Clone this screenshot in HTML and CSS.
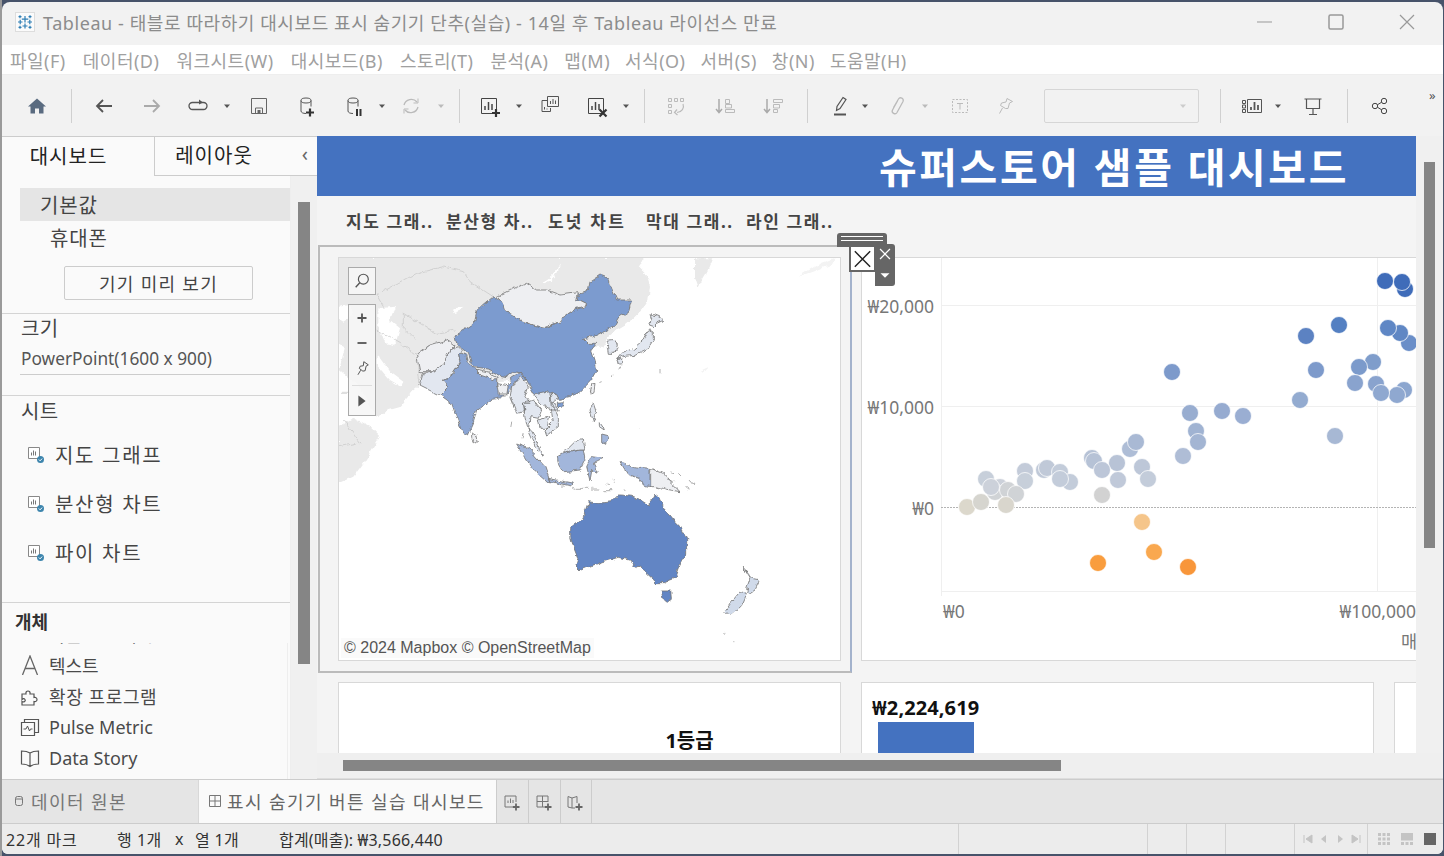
FILE: index.html
```html
<!DOCTYPE html>
<html lang="ko">
<head>
<meta charset="utf-8">
<title>Tableau</title>
<link rel="stylesheet" href="styles.css">
</head>
<body>
<svg class="defs" width="0" height="0">
  <defs>
    <symbol id="caret" viewBox="0 0 24 24"><path d="M9 10.500h6l-3 3.500z" fill="currentColor"/></symbol>
    <symbol id="bars" viewBox="0 0 24 24"><path d="M4.500 4.500h15v15h-15z" fill="none" stroke="currentColor"/><path d="M8 16v-4M11.500 16V8M15 16v-6" stroke="currentColor" stroke-width="1.500"/></symbol>
    <symbol id="sheet" viewBox="0 0 16 16"><path d="M.5.500h11v11H.5z" fill="#fff" stroke="#888"/><path d="M3.500 8.500v-3M5.500 8.500v-5M7.500 8.500v-4" stroke="#777"/><circle cx="12.500" cy="12.500" r="3.500" fill="#3d85ad"/><path d="M10.800 12.500l1.300 1.300 2-2.200" fill="none" stroke="#fff"/></symbol>
    <symbol id="cyl" viewBox="0 0 24 24"><ellipse cx="11" cy="6.500" rx="5" ry="2.500" fill="none" stroke="#555"/><path d="M6 6.500v10.500c0 1.500 2 2.500 5 2.500M16 6.500v6" fill="none" stroke="#555"/></symbol>
    <symbol id="sortbars" viewBox="0 0 24 24"><path d="M7 5v13M4 15l3 3.500 3-3.500" fill="none" stroke="#aaa" stroke-width="1.500"/></symbol>
  </defs>
</svg>
<div class="win">
  <header class="titlebar">
    <svg class="logo" viewBox="0 0 20 20" width="20" height="20">
      <rect x=".5" y=".5" width="19" height="19" fill="#fbfbfb" stroke="#ddd"/>
      <path d="M10 4v6.500M6.800 7.200h6.500M10 11.500v5M7.500 14h5M3 10h4.500M5.200 7.700v4.500M12.500 10H17M14.800 7.700v4.500M5 3.200v3M3.500 4.700h3M15 3.200v3M13.500 4.700h3M5 13.800v3M3.500 15.300h3M15 13.800v3M13.500 15.300h3" stroke="#2f7fb5" stroke-width="1.200"/>
    </svg>
    <span class="title">Tableau - 태블로 따라하기 대시보드 표시 숨기기 단추(실습) - 14일 후 Tableau 라이선스 만료</span>
    <svg class="winbtn" viewBox="0 0 24 24" width="24" height="24"><path d="M4 12h15" stroke="#999"/></svg>
    <svg class="winbtn" viewBox="0 0 24 24" width="24" height="24"><rect x="5" y="5" width="14" height="14" rx="1.500" fill="none" stroke="#999" stroke-width="1.500"/></svg>
    <svg class="winbtn" viewBox="0 0 24 24" width="24" height="24"><path d="M5 5l14 14M19 5L5 19" stroke="#999" stroke-width="1.200"/></svg>
  </header>
  <nav class="menu">
    <span>파일(F)</span><span>데이터(D)</span><span>워크시트(W)</span><span>대시보드(B)</span><span>스토리(T)</span><span>분석(A)</span><span>맵(M)</span><span>서식(O)</span><span>서버(S)</span><span>창(N)</span><span>도움말(H)</span>
  </nav>
  <div class="toolbar">
    <div class="tb"><svg viewBox="0 0 24 24"><path d="M12 4.500l9 8h-2.500v7h-4.500v-5h-4v5H5.500v-7H3z" fill="#5a6b80"/></svg></div>
    <div class="sep m14"></div>
    <div class="tb m13"><svg viewBox="0 0 24 24"><path d="M20 12H5M11 6l-6 6 6 6" fill="none" stroke="#555" stroke-width="1.800"/></svg></div>
    <div class="tb m28"><svg viewBox="0 0 24 24"><path d="M4 12h15M13 6l6 6-6 6" fill="none" stroke="#aaa" stroke-width="1.800"/></svg></div>
    <div class="tb m26"><svg viewBox="0 0 24 24"><path d="M9 8.500H6.500a3.500 3.500 0 0 0 0 7h11a3.500 3.500 0 0 0 0-7H9" fill="none" stroke="#555" stroke-width="1.300"/><path d="M13 5.500l4 3-4 2z" fill="#555"/></svg></div>
    <div class="tb m9 cdark"><svg><use href="#caret"/></svg></div>
    <div class="tb m12"><svg viewBox="0 0 24 24"><path d="M4.500 4.500h15v15h-15zM8.500 19v-5h7v5" fill="none" stroke="#666"/><path d="M10.500 16h3v3h-3z" fill="#666"/></svg></div>
    <div class="tb m28"><svg viewBox="0 0 24 24"><use href="#cyl"/><path d="M15 14.500v8M11 18.500h8" stroke="#333" stroke-width="2.200"/></svg></div>
    <div class="tb m27"><svg viewBox="0 0 24 24"><use href="#cyl"/><path d="M15 15v7M18.500 15v7" stroke="#333" stroke-width="2"/></svg></div>
    <div class="tb m8 cdark"><svg><use href="#caret"/></svg></div>
    <div class="tb m9"><svg viewBox="0 0 24 24"><path d="M5 11a7.500 7.500 0 0 1 13-3M19 13a7.500 7.500 0 0 1-13 3" fill="none" stroke="#bbb" stroke-width="1.300"/><path d="M19 4.500v4.500h-4.500M5 19.500V15h4.500" fill="none" stroke="#bbb"/></svg></div>
    <div class="tb m10 clight"><svg><use href="#caret"/></svg></div>
    <div class="sep mn2"></div>
    <div class="tb m10"><svg viewBox="0 0 24 24"><use href="#bars"/><path d="M19 15v8M15 19h8" stroke="#333" stroke-width="2.200"/></svg></div>
    <div class="tb m10 cdark"><svg><use href="#caret"/></svg></div>
    <div class="tb m11"><svg viewBox="0 0 24 24"><path d="M11 6.500h-7v11h8.500V14" fill="none" stroke="#555"/><path d="M9.500 2.500h11v10h-11z" fill="#f2f2f2" stroke="#555"/><path d="M12.500 10V7M15 10V5M17.500 10V6.500M6.500 15.500V13M9 15.500v-1" stroke="#555"/></svg></div>
    <div class="tb m26"><svg viewBox="0 0 24 24"><use href="#bars"/><path d="M15.500 15.500l7 7M22.500 15.500l-7 7" stroke="#333" stroke-width="2.200"/></svg></div>
    <div class="tb m10 cdark"><svg><use href="#caret"/></svg></div>
    <div class="sep mn2"></div>
    <div class="tb m12"><svg viewBox="0 0 24 24"><path d="M4.500 4.500h3v3h-3zM10.500 4.500h3v3h-3zM16.500 4.500h3v3h-3zM4.500 10.500h3v3h-3zM4.500 16.500h3v3h-3z" fill="none" stroke="#bbb"/><path d="M19 10c1.500 4-1 8-6 8.500M13 15.500l-2.500 3 3 2.500" fill="none" stroke="#bbb" stroke-width="1.200"/></svg></div>
    <div class="tb m28"><svg viewBox="0 0 24 24"><use href="#sortbars"/><path d="M13.500 5.500h4v4h-4zM13.500 10.500h6v3.500h-6zM13.500 15.500h9v3h-9z" fill="none" stroke="#bbb"/></svg></div>
    <div class="tb m28"><svg viewBox="0 0 24 24"><use href="#sortbars"/><path d="M13.500 5.500h9v3h-9zM13.500 10.500h6v3.500h-6zM13.500 15.500h4v3h-4z" fill="none" stroke="#bbb"/></svg></div>
    <div class="sep m15"></div>
    <div class="tb m13"><svg viewBox="0 0 24 24"><path d="M15 3.500l3 2-6 9-3.500 2 .5-4z" fill="none" stroke="#555" stroke-width="1.200"/><path d="M6 20.500h12" stroke="#555" stroke-width="1.800"/></svg></div>
    <div class="tb m5 cdark"><svg><use href="#caret"/></svg></div>
    <div class="tb m12"><svg viewBox="0 0 24 24"><path d="M8.500 13.500l5-8.500c1.500-2.500 6-.5 4.500 2.500l-6 11c-1.500 2.500-6 .5-4.500-2.500l5-9" fill="none" stroke="#bbb" stroke-width="1.300"/></svg></div>
    <div class="tb m8 clight"><svg><use href="#caret"/></svg></div>
    <div class="tb m15"><svg viewBox="0 0 24 24"><path d="M4.500 5.500h15v13h-15z" fill="none" stroke="#bbb" stroke-dasharray="2 1.500"/><path d="M9 9.500h6M12 9.500v6" stroke="#bbb"/></svg></div>
    <div class="tb m25"><svg viewBox="0 0 24 24"><path d="M14 4.500l5.500 3-3 1.500-1.500 5.500-2.500 0-5-3 1-2.500L13 8zM9.500 14l-3 5.500" fill="none" stroke="#bbb"/></svg></div>
    <div class="combo"><svg viewBox="0 0 24 24"><use href="#caret"/></svg></div>
    <div class="sep m11"></div>
    <div class="tb m12"><svg viewBox="0 0 24 24"><path d="M2.500 6.500h3v3h-3zM2.500 11h3v3h-3zM2.500 15.500h3v3h-3zM7.500 5.500h14v13h-14z" fill="none" stroke="#555"/><path d="M11 16v-3M14.500 16V8M18 16v-5" stroke="#555" stroke-width="1.800"/></svg></div>
    <div class="tb m6 cdark"><svg><use href="#caret"/></svg></div>
    <div class="tb m15"><svg viewBox="0 0 24 24"><path d="M3.500 5h17M5.500 5.500v9h13v-9M12 14.500v6M8 20.500h8" fill="none" stroke="#555" stroke-width="1.200"/></svg></div>
    <div class="sep m14"></div>
    <div class="tb m13"><svg viewBox="0 0 24 24"><circle cx="7" cy="12" r="2.700" fill="none" stroke="#444"/><circle cx="16" cy="7" r="2.700" fill="none" stroke="#444"/><circle cx="16" cy="17" r="2.700" fill="none" stroke="#444"/><path d="M9.500 10.700l4-2.400M9.500 13.300l4 2.400" stroke="#444"/></svg></div>
    <span class="more">»</span>
  </div>
  <main class="body">
    <aside class="side">
      <div class="side-tabs">
        <div class="stab stab-on">대시보드</div>
        <div class="stab">레이아웃<span class="collapse">‹</span></div>
      </div>
      <div class="side-main">
        <div class="side-col">
          <div class="devices">
            <div class="dev dev-on">기본값</div>
            <div class="dev dev-sub">휴대폰</div>
            <div class="devbtn">기기 미리 보기</div>
          </div>
          <section class="size">
            <div class="h">크기</div>
            <div class="sizeval">PowerPoint(1600 x 900)</div>
          </section>
          <section class="sheets">
            <div class="h">시트</div>
            <div class="sheet"><svg viewBox="0 0 16 16" width="16" height="16"><use href="#sheet"/></svg>지도 그래프</div>
            <div class="sheet"><svg viewBox="0 0 16 16" width="16" height="16"><use href="#sheet"/></svg>분산형 차트</div>
            <div class="sheet"><svg viewBox="0 0 16 16" width="16" height="16"><use href="#sheet"/></svg>파이 차트</div>
          </section>
          <section class="objects">
            <div class="objh">개체</div>
            <div class="objlist">
              <div class="obj"><svg viewBox="0 0 20 20" width="20" height="20"><path d="M4 2h10v14H4z" fill="none" stroke="#666"/></svg>다운로드 대시보드</div>
              <div class="obj"><svg viewBox="0 0 20 20" width="20" height="20"><path d="M2.500 20L10 1l7.500 19M5.200 13.500h9.600" fill="none" stroke="#666" stroke-width="1.300"/></svg>텍스트</div>
              <div class="obj obj-wide"><svg viewBox="0 0 20 20" width="20" height="20"><path d="M2 8h4c-1-4 5-4 4 0h4v3.500c4-1 4 5 0 4V19H2v-3.500c2 1 4-.5 3-2s-2-1-3 0z" fill="none" stroke="#555" stroke-width="1.200"/></svg>확장 프로그램</div>
              <div class="obj"><svg viewBox="0 0 20 20" width="20" height="20"><path d="M1.500 5.500h13v13h-13zM4.500 5.500v-3h14v13h-4" fill="none" stroke="#555" stroke-width="1.200"/><path d="M3.500 12h2.500l1.500-3 2 5 1-2h2" fill="none" stroke="#555"/></svg>Pulse Metric</div>
              <div class="obj"><svg viewBox="0 0 20 20" width="20" height="20"><path d="M10 5C7 3 4 3 1.500 3v13c3 0 6 .5 8.500 2.500 2.500-2 5.500-2.500 8.500-2.500V3C16 3 13 3 10 5zv13.500" fill="none" stroke="#555" stroke-width="1.200"/></svg>Data Story</div>
            </div>
          </section>
        </div>
        <div class="side-scroll"><div class="side-thumb"></div></div>
      </div>
    </aside>
    <div class="stage">
      <div class="stage-top">
        <div class="viewport">
          <div class="banner">슈퍼스토어 샘플 대시보드</div>
          <div class="filters"><span>지도 그래..</span><span>분산형 차..</span><span class="f-wide">도넛 차트</span><span>막대 그래..</span><span>라인 그래..</span></div>
          <div class="row1">
            <div class="view map">
              <svg class="mapsvg" viewBox="54 51 1506 1209" width="502" height="403">
                <defs>
                  <filter id="rough" filterUnits="userSpaceOnUse" x="0" y="0" width="1600" height="1300" primitiveUnits="userSpaceOnUse" color-interpolation-filters="sRGB">
                    <feTurbulence type="fractalNoise" baseFrequency="0.045" numOctaves="4" seed="7"/>
                    <feDisplacementMap in="SourceGraphic" scale="16" xChannelSelector="R" yChannelSelector="G"/>
                  </filter>
                </defs>
                <g class="rough">
                <g class="land">
                  <path d="M54 51H970V60L955 80 980 105 990 140 985 180 965 210 940 235 915 255 890 270 865 290 850 320 800 320 600 420 300 435 280 450 240 500 205 510 170 530 120 440 70 400 54 385z"/>
                  <path d="M54 560L100 535 150 560 180 590 130 670 100 710 54 730z"/>
                  <path d="M1125 55H1180L1165 90 1135 140 1125 110z"/>
                </g>
                <path class="landfaint" d="M1435 110L1500 70 1550 52 1540 70 1480 95zM1140 390l20-10 5 5-20 10z"/>
                <g class="sea">
                  <path d="M175 205L225 200 210 240 240 265 225 315 195 310 175 260z"/>
                  <path d="M170 340L210 395 250 425 245 440 210 420 170 375z"/>
                  <path d="M54 200L90 195 100 225 70 245 54 235z"/>
                  <path d="M54 315L75 320 60 380 54 385zM400 205l30-5-5 10-25 10zM675 130c25-5 40-30 45-60-10 25-25 45-50 55zM1000 110l8 40 4 0-6-40z"/>
                </g>
                <path class="border" d="M170 165L290 100 370 80 430 95 450 125 520 170M170 165L190 200M250 220L350 280 405 270M250 220V260L290 300M170 270L240 310 290 345 300 435M60 460H90M70 540L120 610M54 620L110 610"/>
                <g class="c1">
                  <path d="M405 285L440 265 462 250 470 215 490 195 520 170 545 185 555 215 600 240 630 252 675 262 720 245 740 225 770 205 800 195 770 180 780 158 805 150 810 125 840 105 865 115 875 145 890 180 935 180 925 215 900 230 885 255 850 275 820 290 790 295 805 310 830 310 815 330 825 360 830 390 810 425 780 455 745 470 720 475 705 470 670 470 645 465 625 430 610 400 580 395 560 410 535 405 505 390 470 385 455 370 445 340 430 330 410 310z"/>
                  <path d="M712 487L730 485 728 498 712 500z"/>
                </g>
                <g class="c2">
                  <path d="M415 335L440 345 445 365 470 395 530 420 530 440 560 435 575 415 605 395 620 420 600 425 580 430 565 455 545 470 520 475 470 510 460 545 440 590 420 560 395 490 360 465 385 440 370 420 400 400 420 370z"/>
                </g>
                <g class="c3">
                  <path d="M590 612L625 625 675 680 690 725 680 725 640 690zM685 715L760 730 755 738 690 725zM712 650L730 640 780 630 790 630 795 660 780 690 730 695 715 670zM800 680L815 650 850 655 820 670 835 700 815 690 810 720zM900 665L940 680 990 685 990 740 970 735 960 715 925 705zM845 585L865 590 860 610 845 605z"/>
                </g>
                <g class="c4">
                  <path d="M300 435L310 400 345 395 370 370 390 330 415 320 430 335 415 340 420 370 400 400 370 420 385 440 360 465zM575 440L605 410 625 440 615 470 630 490 610 490 615 515 590 520 570 470zM610 490L640 480 665 510 655 535 630 530 625 570 615 530zM655 540L690 530 680 565 660 565zM690 455L720 470 695 490 715 530 715 560 680 585 675 570 700 545 695 515zM640 465L690 455 695 480 715 510 690 510 665 495zM625 570L635 570 660 620 670 650 650 625zM730 640L770 600 790 600 795 630 780 630zM810 510L820 490 830 520 820 545zM835 545l10 10 5 15-15-10zM865 300L885 298 892 315 885 340 865 340 862 320zM990 220L1015 230 1032 240 1010 250 1000 260 985 255 995 235zM985 270L1000 280 1000 300 980 330 950 345 910 350 890 360 905 340 940 325 970 300zM890 355L905 360 905 375 895 375z"/>
                </g>
                <g class="c5">
                  <path d="M290 345L330 315 380 300 405 320 390 330 370 370 345 395 300 395zM465 390L510 400 535 415 525 420 480 405zM530 428L565 435 560 465 535 465zM530 170L570 150 620 130 650 150 680 150 720 165 775 158 770 180 800 195 770 205 740 225 720 245 675 262 630 252 600 240 555 215 545 185zM455 575L470 585 475 605 462 610 455 595zM815 435L825 433 822 455 810 462zM992 685L1030 700 1055 730 1080 755 1040 748 1010 740 992 740z"/>
                </g>
                <g class="c6">
                  <path d="M752 865L785 840 790 830 805 785 835 790 875 785 895 765 905 765 945 770 985 795 1000 770 1002 760 1015 770 1035 810 1055 835 1085 865 1100 895 1100 940 1080 975 1065 1015 1030 1028 1010 1028 980 1000 965 975 945 985 930 960 895 952 850 965 805 980 780 990 765 975 772 950 760 920 752 890z"/>
                  <path d="M1024 1053H1055L1057 1075 1040 1088 1030 1080z"/>
                </g>
                <g class="c7">
                  <path d="M1270 982L1295 1015 1320 1020 1305 1050 1290 1060 1280 1045 1290 1015zM1260 1055L1282 1060 1265 1100 1230 1130 1215 1115 1235 1085z"/>
                </g>
                <path class="specks" d="M905 380l-8 12M880 405l-10 5M845 425l-8 3M1020 390v10M610 580l-4 15M575 545l-3 15M1110 720l12 15M1095 740l10 8M1040 720l20 5M1210 1180l3 0M1240 1205l3 0M960 560h3M815 745l5 0M880 715v10M860 730l10 5M770 745h30M810 750h25M850 752h30M720 738h12M760 742l8 3M905 745l12 5M1075 700l8 8M1055 695l10 3"/>
                </g>
              </svg>
              <div class="mapctl mapsearch"><svg viewBox="0 0 20 20" width="18" height="18"><circle cx="11.500" cy="8" r="5.500" fill="none" stroke="#555" stroke-width="1.300"/><path d="M7.500 12l-4.500 5" stroke="#555" stroke-width="1.500"/></svg></div>
              <div class="mapctl mapzoom">
                <svg viewBox="0 0 20 20" width="18" height="18"><path d="M10 5v10M5 10h10" stroke="#555" stroke-width="2"/></svg>
                <svg viewBox="0 0 20 20" width="18" height="18"><path d="M5 10h10" stroke="#555" stroke-width="2"/></svg>
                <svg viewBox="0 0 20 20" width="18" height="18"><path d="M12 3l5 3.500-2.500 1.500-1 5-2.500.5-4-3 1-2.500 3.500-.5zM8.500 12.500l-3 5" fill="none" stroke="#555" stroke-width="1.100"/></svg>
                <i class="ctlsep"></i>
                <svg viewBox="0 0 20 20" width="18" height="18"><path d="M6 4l8 6-8 6z" fill="#555"/></svg>
              </div>
              <div class="attrib">© 2024 Mapbox © OpenStreetMap</div>
            </div>
            <div class="view scatter">
              <svg viewBox="861 257 555 403" width="555" height="403">
                <g class="grid">
                  <path d="M941 305.500H1416M941 406.500H1416M941 591.500H1416M941.500 257V596M1377.500 257V591"/>
                </g>
                <path class="zero" d="M941 507.500H1416"/>
                <g class="pts">
                  <circle cx="1405" cy="289" r="8.500" fill="#3f6cb9"/><circle cx="1385" cy="281" r="8.500" fill="#3f6cb9"/><circle cx="1402" cy="282" r="8.500" fill="#3f6cb9"/>
                  <circle cx="1339" cy="325" r="8.500" fill="#5480c2"/><circle cx="1306" cy="336" r="8.500" fill="#5c82c2"/><circle cx="1409" cy="343" r="8.500" fill="#6a8ec8"/><circle cx="1400" cy="333" r="8.500" fill="#6087c4"/><circle cx="1388" cy="328" r="8.500" fill="#5f87c5"/>
                  <circle cx="1373" cy="362" r="8.500" fill="#7f9dcb"/><circle cx="1359" cy="367" r="8.500" fill="#7b9acb"/><circle cx="1316" cy="370" r="8.500" fill="#7d9acb"/><circle cx="1172" cy="372" r="8.500" fill="#7d9acb"/>
                  <circle cx="1355" cy="383" r="8.500" fill="#89a3ce"/><circle cx="1376" cy="384" r="8.500" fill="#89a3ce"/><circle cx="1404" cy="390" r="8.500" fill="#8ca6cf"/><circle cx="1397" cy="395" r="8.500" fill="#8fa8d0"/><circle cx="1381" cy="393" r="8.500" fill="#8fa8d0"/>
                  <circle cx="1300" cy="400" r="8.500" fill="#93abd0"/><circle cx="1335" cy="436" r="8.500" fill="#a7b8d4"/><circle cx="1222" cy="411" r="8.500" fill="#96abd0"/><circle cx="1243" cy="416" r="8.500" fill="#9aaed2"/><circle cx="1190" cy="413" r="8.500" fill="#98add0"/>
                  <circle cx="1196" cy="431" r="8.500" fill="#a0b3d2"/><circle cx="1198" cy="442" r="8.500" fill="#a3b5d3"/><circle cx="1183" cy="456" r="8.500" fill="#afbdd6"/><circle cx="1130" cy="449" r="8.500" fill="#aebdd6"/><circle cx="1136" cy="442" r="8.500" fill="#a9b9d4"/>
                  <circle cx="1092" cy="458" r="8.500" fill="#b6c2d6"/><circle cx="1094" cy="461" r="8.500" fill="#b6c2d6"/><circle cx="1117" cy="463" r="8.500" fill="#b8c3d6"/><circle cx="1102" cy="470" r="8.500" fill="#bcc6d8"/><circle cx="1118" cy="480" r="8.500" fill="#c0c9d9"/><circle cx="1142" cy="467" r="8.500" fill="#bdc7d8"/><circle cx="1148" cy="479" r="8.500" fill="#c3ccda"/><circle cx="1102" cy="495" r="8.500" fill="#d2d2d2"/>
                  <circle cx="1025" cy="471" r="8.500" fill="#c3cbd9"/><circle cx="1025" cy="481" r="8.500" fill="#c7cfda"/><circle cx="1044" cy="470" r="8.500" fill="#c0c9d8"/><circle cx="1047" cy="468" r="8.500" fill="#c0c9d8"/><circle cx="1060" cy="472" r="8.500" fill="#c3ccda"/><circle cx="1070" cy="482" r="8.500" fill="#c3ccda"/><circle cx="1060" cy="479" r="8.500" fill="#c3ccda"/>
                  <circle cx="986" cy="479" r="8.500" fill="#c7cfda"/><circle cx="1000" cy="487" r="8.500" fill="#ccd1da"/><circle cx="995" cy="492" r="8.500" fill="#d0d3d6"/><circle cx="1008" cy="490" r="8.500" fill="#d0d3d6"/><circle cx="991" cy="487" r="8.500" fill="#ccd1da"/><circle cx="1016" cy="494" r="8.500" fill="#d0d3d6"/>
                  <circle cx="1006" cy="505" r="8.500" fill="#d9d6cd"/><circle cx="967" cy="507" r="8.500" fill="#dcd8cc"/><circle cx="981" cy="502" r="8.500" fill="#d6d5cf"/>
                  <circle cx="1142" cy="522" r="8.500" fill="#f5c58a"/><circle cx="1154" cy="552" r="8.500" fill="#f9a84f"/><circle cx="1098" cy="563" r="8.500" fill="#f99d3e"/><circle cx="1188" cy="567" r="8.500" fill="#f8963a"/>
                </g>
                <g class="axis">
                  <text x="934" y="313" text-anchor="end">₩20,000</text>
                  <text x="934" y="414" text-anchor="end">₩10,000</text>
                  <text x="934" y="515" text-anchor="end">₩0</text>
                  <text x="943" y="618">₩0</text>
                  <text x="1416" y="618" text-anchor="end">₩100,000</text>
                  <text x="1401" y="648">매출</text>
                </g>
              </svg>
            </div>
          </div>
          <div class="row2">
            <div class="view donut"><b>1등급</b></div>
            <div class="view barview"><b>₩2,224,619</b><div class="bar"></div></div>
            <div class="view stub"></div>
          </div>
          <div class="selframe"></div>
          <div class="grip"><i></i></div>
          <div class="closebox"><svg viewBox="0 0 24 24" width="24" height="24"><path d="M4 4l16 16M20 4L4 20" stroke="#222" stroke-width="1.500"/></svg></div>
          <div class="viewmenu">
            <svg viewBox="0 0 20 20" width="18" height="18"><path d="M4.500 4.500l11 11M15.500 4.500l-11 11" stroke="#fff" stroke-width="1.400"/></svg>
            <svg viewBox="0 0 20 20" width="18" height="18"><path d="M5 7h10l-5 5z" fill="#fff"/></svg>
          </div>
        </div>
        <div class="vscroll"><div class="vthumb"></div></div>
      </div>
      <div class="hscroll"><div class="hthumb"></div></div>
    </div>
  </main>
  <div class="tabs">
    <div class="tab-src"><svg viewBox="0 0 10 12" width="10" height="12"><rect x="1.500" y="1.500" width="7" height="9" rx="2" fill="none" stroke="#777"/><path d="M1.500 4h7" stroke="#777"/></svg>데이터 원본</div>
    <div class="tab-dash"><svg viewBox="0 0 12 12" width="12" height="12"><path d="M.5.500h11v11H.5zM6 .5v11M.5 6h11" fill="none" stroke="#777"/></svg>표시 숨기기 버튼 실습 대시보드</div>
    <div class="tab-new"><svg viewBox="0 0 18 18" width="18" height="18"><path d="M9 13H2V2h11v6" fill="none" stroke="#777"/><path d="M5 9V6.500M7.500 9V4.500M10 9V6" stroke="#777"/><path d="M13 9.500v7M9.500 13h7" stroke="#666" stroke-width="1.800"/></svg></div>
    <div class="tab-new"><svg viewBox="0 0 18 18" width="18" height="18"><path d="M9 13H2V2h11v6M7.500 2v11M2 7.500h11" fill="none" stroke="#777"/><path d="M13 9.500v7M9.500 13h7" stroke="#666" stroke-width="1.800"/></svg></div>
    <div class="tab-new"><svg viewBox="0 0 18 18" width="18" height="18"><path d="M2 2.500l4 1.500 5-1.500V9M2 2.500V13l4 1h3M6 4v10" fill="none" stroke="#777"/><path d="M13 9.500v7M9.500 13h7" stroke="#666" stroke-width="1.800"/></svg></div>
  </div>
  <footer class="status">
    <div class="st-main"><span class="st-a">22개 마크</span><span class="st-b">행 1개</span><span class="st-c">x</span><span class="st-d">열 1개</span><span class="st-e">합계(매출): ₩3,566,440</span></div>
    <div class="st-cell w189"></div><div class="st-cell w39"></div><div class="st-cell w39"></div><div class="st-cell w69"></div>
    <div class="st-cell w73 st-nav">
      <svg viewBox="0 0 12 12" width="12" height="12"><path d="M2 2v8M10 2v8L4 6z" fill="#c4c4c4" stroke="#c4c4c4"/></svg>
      <svg viewBox="0 0 12 12" width="12" height="12"><path d="M8 2v8L3 6z" fill="#c4c4c4"/></svg>
      <svg viewBox="0 0 12 12" width="12" height="12"><path d="M4 2v8l5-4z" fill="#c4c4c4"/></svg>
      <svg viewBox="0 0 12 12" width="12" height="12"><path d="M10 2v8M2 2v8l6-4z" fill="#c4c4c4" stroke="#c4c4c4"/></svg>
    </div>
    <div class="st-view">
      <svg viewBox="0 0 12 12" width="12" height="12"><path d="M0 0h3v3H0zM4.500 0h3v3h-3zM9 0h3v3H9zM0 4.500h3v3H0zM4.500 4.500h3v3h-3zM9 4.500h3v3H9zM0 9h3v3H0zM4.500 9h3v3h-3zM9 9h3v3H9z" fill="#c4c4c4"/></svg>
      <svg viewBox="0 0 12 12" width="12" height="12"><path d="M0 0h12v7.500H0zM0 9h3v3H0zM4.500 9h3v3h-3zM9 9h3v3H9z" fill="#c4c4c4"/></svg>
      <svg viewBox="0 0 12 12" width="12" height="12"><path d="M0 0h12v12H0z" fill="#666"/></svg>
    </div>
  </footer>
</div>
</body>
</html>
```

FILE: styles.css
```css
* { box-sizing: border-box; }
html, body { margin: 0; height: 100%; }
body {
  width: 1444px; height: 856px; overflow: hidden; position: relative;
  background: linear-gradient(90deg, #9a9a9a 2px, #47536a 2px);
  font-family: "Noto Sans", "Noto Sans CJK KR", sans-serif;
  color: #444;
}
.defs { position: absolute; }
.win {
  margin: 2px 1px 2px 2px; height: 852px;
  display: flex; flex-direction: column;
  background: #f2f2f2; border-radius: 8px 8px 6px 6px; overflow: hidden;
}
.titlebar { height: 43px; flex: none; display: flex; align-items: center; padding: 0 24px 3px 13px; color: #8c8c8c; }
.logo { flex: none; }
.title { margin-left: 8px; font-size: 18px; letter-spacing: .58px; flex: 1; white-space: nowrap; color: #8c8c8c; }
.winbtn { flex: none; margin-left: 47px; }
.menu { height: 30px; flex: none; background: #fff; display: flex; align-items: center; gap: 17px; padding-left: 8px; font-size: 18px; letter-spacing: .5px; color: #a0a0a0; white-space: nowrap; border-bottom: 1px solid #eee; }
.menu span:nth-child(n+7) { margin-left: -2px; }
.menu span:nth-child(7) { margin-left: -1px; }
.toolbar { height: 61px; flex: none; display: flex; align-items: center; padding-left: 25px; position: relative; }
.tb { width: 20px; height: 24px; flex: none; display: flex; justify-content: center; }
.tb svg { width: 24px; height: 24px; flex: none; overflow: visible; }
.cdark { color: #555; }
.clight { color: #bbb; }
.sep { width: 20px; height: 34px; flex: none; background: linear-gradient(#d0d0d0, #d0d0d0) center / 1px 100% no-repeat; }
.m5 { margin-left: 5px; } .m6 { margin-left: 6px; } .m8 { margin-left: 8px; } .m9 { margin-left: 9px; }
.m10 { margin-left: 10px; } .m11 { margin-left: 11px; } .m12 { margin-left: 12px; } .m13 { margin-left: 13px; }
.m14 { margin-left: 14px; } .m15 { margin-left: 15px; } .m25 { margin-left: 25px; }
.m26 { margin-left: 26px; } .m27 { margin-left: 27px; } .m28 { margin-left: 28px; }
.mn2 { margin-left: -2px; }
.combo { margin-left: 29px; width: 155px; height: 34px; flex: none; border: 1px solid #d6d6d6; border-radius: 2px; display: flex; align-items: center; justify-content: flex-end; color: #ccc; padding-right: 3px; }
.combo svg { width: 24px; height: 24px; }
.more { position: absolute; left: 1427px; top: 11px; font-size: 13px; color: #555; }

.body { flex: 1; min-height: 0; display: flex; }
.side { width: 315px; flex: none; background: #fafafa; display: flex; flex-direction: column; border-top: 1px solid #ccc; }
.side-tabs { height: 39px; flex: none; display: flex; }
.stab { font-size: 20px; letter-spacing: 1px; color: #222; display: flex; align-items: center; justify-content: center; position: relative; padding-bottom: 3px; }
.stab-on { width: 152px; padding-right: 19px; }
.stab:not(.stab-on) { width: 163px; border-left: 1px solid #ccc; border-bottom: 1px solid #ccc; padding-right: 44px; }
.collapse { position: absolute; right: 8px; top: 3px; font-size: 20px; color: #666; }
.side-main { flex: 1; min-height: 0; display: flex; }
.side-col { width: 288px; flex: none; display: flex; flex-direction: column; }
.side-scroll { flex: 1; background: #f0f0f0; padding: 26px 7px 0; border-left: 1px solid #eee; }
.side-thumb { height: 462px; background: #858585; }
.devices { height: 138px; flex: none; padding: 12px 0 0 18px; border-bottom: 1px solid #d4d4d4; }
.dev { height: 33px; font-size: 20px; letter-spacing: .8px; display: flex; align-items: center; color: #444; }
.dev-on { background: #e5e5e5; padding-left: 20px; }
.dev-sub { padding-left: 30px; }
.devbtn { margin: 12px 0 0 44px; width: 189px; height: 34px; border: 1px solid #ccc; border-radius: 2px; font-size: 18px; letter-spacing: 1.300px; display: flex; align-items: center; justify-content: center; color: #444; }
.size { height: 82px; flex: none; border-bottom: 1px solid #d4d4d4; padding: 0 0 0 18px; }
.h { font-size: 20px; line-height: 30px; color: #444; padding-left: 1px; letter-spacing: .4px; }
.sizeval { font-size: 17.300px; line-height: 30px; height: 31px; border-bottom: 1px solid #ccc; color: #555; padding-left: 1px; white-space: nowrap; }
.sheets { height: 207px; flex: none; border-bottom: 1px solid #d4d4d4; padding: 1px 0 0 18px; }
.sheets .h { line-height: 30px; margin-bottom: 3px; }
.sheet { height: 49px; display: flex; align-items: center; font-size: 20px; letter-spacing: 1.700px; color: #444; padding-left: 8px; gap: 11px; }
.objects { flex: 1; min-height: 0; display: flex; flex-direction: column; }
.objh { height: 40px; flex: none; padding: 5px 0 0 13px; font-size: 18px; font-weight: 700; color: #333; }
.objlist { flex: 1; min-height: 0; overflow: hidden; display: flex; flex-direction: column; justify-content: flex-end; padding: 0 0 6px 18px; border-right: 1px solid #eee; margin-right: 2px; }
.obj { height: 31px; flex: none; display: flex; align-items: center; gap: 9px; font-size: 18px; color: #4a4a4a; white-space: nowrap; }
.obj-wide { letter-spacing: .6px; }

.stage { flex: 1; min-width: 0; display: flex; flex-direction: column; background: #f4f4f4; }
.stage-top { flex: 1; min-height: 0; display: flex; }
.viewport { width: 1099px; flex: none; position: relative; overflow: hidden; background: #f4f4f4; }
.vscroll { flex: 1; background: #f0f0f0; padding: 26px 8px 0; }
.vthumb { height: 386px; background: #858585; }
.hscroll { height: 26px; flex: none; background: #efefef; padding: 7px 0 0 26px; border-bottom: 1px solid #ddd; }
.hthumb { width: 718px; height: 11px; background: #858585; }

.banner { height: 60px; background: #4472c0; color: #fff; font-size: 41px; font-weight: 700; display: flex; align-items: center; justify-content: flex-end; padding: 0 67px 3px 0; letter-spacing: 2.600px; white-space: nowrap; }
.filters { height: 49px; display: flex; align-items: center; padding: 0 0 0 29px; font-size: 17px; font-weight: 700; color: #444; letter-spacing: 1.600px; white-space: nowrap; }
.filters span { width: 100px; flex: none; }
.filters .f-wide { padding-left: 2px; letter-spacing: 2.200px; }
.row1 { display: flex; gap: 20px; padding: 12px 0 0 21px; }
.view { background: #fff; border: 1px solid #d8d8d8; position: relative; flex: none; }
.map { width: 503px; height: 404px; overflow: hidden; }
.view > svg { display: block; margin: -1px; }
.rough { filter: url(#rough); }
.scatter { width: 556px; height: 404px; border-right: 0; overflow: hidden; }
.land path { fill: #e9e9e9; }
.landfaint { fill: #f3f3f3; }
.sea path { fill: #fff; }
.border { fill: none; stroke: #c4c4c4; stroke-width: 2; }
.c1 path, .c2 path, .c3 path, .c4 path, .c5 path, .c6 path, .c7 path { stroke: #777; stroke-width: 2.500; stroke-linejoin: round; }
.c1 path { fill: #7c9bcf; }
.c2 path { fill: #8ba5d3; }
.c3 path { fill: #a2b6db; }
.c4 path { fill: #e2e7f0; }
.c5 path { fill: #eeeff2; }
.c6 path { fill: #6285c4; }
.c7 path { fill: #d0daea; }
.specks { fill: none; stroke: #888; stroke-width: 2; }
.mapctl { position: absolute; left: 9px; width: 28px; background: rgba(246,246,246,.88); border: 1px solid #aaa; display: flex; flex-direction: column; align-items: center; }
.mapsearch { top: 9px; height: 28px; justify-content: center; }
.mapzoom { top: 46px; height: 112px; padding-top: 4px; gap: 7px; }
.ctlsep { width: 20px; height: 1px; background: #ddd; margin: 1px 0 -1px; }
.attrib { position: absolute; left: 2px; bottom: 2px; padding: 1px 3px; background: rgba(250,250,250,.9); font: 16px "Liberation Sans", sans-serif; color: #555; white-space: nowrap; }
.grid path { fill: none; stroke: #efefef; }
.zero { fill: none; stroke: #b4b4b4; stroke-dasharray: 2 1; }
.pts circle { stroke: rgba(255,255,255,.75); stroke-width: 1; }
.axis text { font: 17.500px "Noto Sans", "Noto Sans CJK KR", sans-serif; fill: #777; }
.row2 { display: flex; padding: 21px 0 0 21px; }
.row2 .view { height: 90px; }
.donut { width: 503px; display: flex; justify-content: center; padding: 42px 0 0 200px; }
.donut b, .barview b { font-size: 20px; color: #111; white-space: nowrap; }
.barview { width: 513px; margin-left: 20px; padding: 12px 0 0 10px; }
.barview b { display: block; line-height: 26px; letter-spacing: .1px; }
.bar { width: 96px; height: 60px; margin: 1px 0 0 6px; background: #4472c0; }
.stub { width: 60px; margin-left: 20px; }
.selframe { position: absolute; left: 1px; top: 109px; width: 534px; height: 428px; border: 2px solid #bbb; border-right-color: #a3b2cc; pointer-events: none; }
.grip { position: absolute; left: 520px; top: 97px; width: 50px; height: 14px; background: #666; border-radius: 3px 3px 0 0; padding: 3px 4px; }
.grip i { display: block; height: 5px; border-top: 1px solid #fff; border-bottom: 1px solid #fff; }
.closebox { position: absolute; left: 532px; top: 109px; width: 27px; height: 27px; background: #fff; border: 2px solid #666; display: flex; align-items: center; justify-content: center; }
.viewmenu { position: absolute; left: 558px; top: 108px; width: 20px; height: 42px; background: #666; border-radius: 0 3px 3px 0; display: flex; flex-direction: column; align-items: center; gap: 4px; padding-top: 1px; }

.tabs { height: 45px; flex: none; display: flex; background: #e5e5e5; border-top: 1px solid #ccc; border-bottom: 1px solid #ccc; }
.tab-src { width: 196px; display: flex; align-items: center; gap: 7px; padding: 0 0 2px 12px; font-size: 18px; color: #777; letter-spacing: 1.400px; }
.tab-dash { width: 298px; background: #fafafa; border-left: 1px solid #d8d8d8; display: flex; align-items: center; gap: 6px; padding: 0 0 2px 10px; font-size: 18px; color: #666; white-space: nowrap; letter-spacing: 1.400px; }
.tab-new { width: 32px; border-left: 1px solid #ccc; display: flex; align-items: center; justify-content: center; padding: 3px 2px 0 0; }
.tab-new:last-child { border-right: 1px solid #ccc; }
.status { height: 30px; flex: none; display: flex; background: #ececec; font-size: 16px; color: #333; white-space: nowrap; }
.st-main { width: 956px; flex: none; position: relative; display: flex; align-items: center; padding-left: 4px; }
.st-a { width: 111px; letter-spacing: .8px; }
.st-b { width: 58px; letter-spacing: .5px; }
.st-c { width: 20px; }
.st-d { width: 84px; letter-spacing: .3px; }
.st-e { letter-spacing: .2px; }
.st-cell { flex: none; border-left: 1px solid #d2d2d2; }
.w189 { width: 189px; } .w39 { width: 39px; } .w69 { width: 69px; } .w73 { width: 73px; }
.st-nav { display: flex; align-items: center; gap: 4px; padding-left: 7px; }
.st-view { flex: 1; border-left: 1px solid #d2d2d2; display: flex; align-items: center; gap: 11px; padding-left: 10px; }
```
